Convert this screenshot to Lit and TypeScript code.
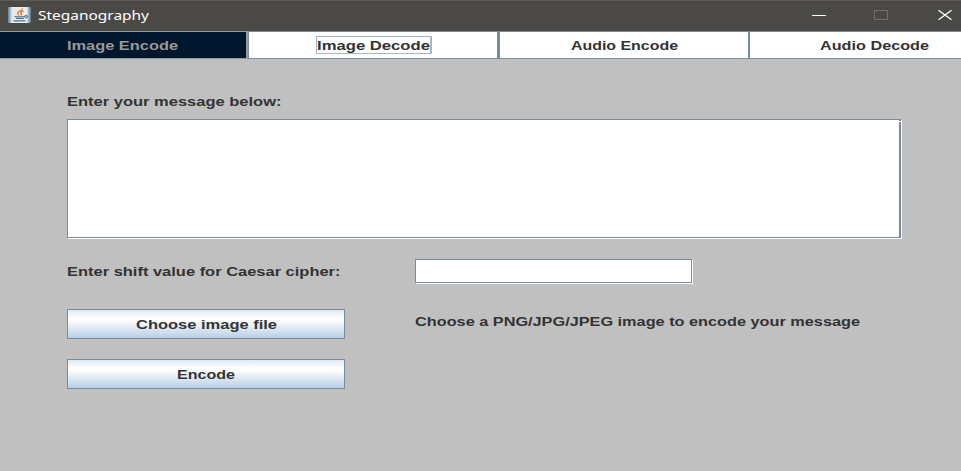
import { LitElement, html, css, svg } from "lit";
import { customElement, property } from "lit/decorators.js";

/** One line of Swing-style text, fitted to a given advance width. */
@customElement("fit-text")
class FitText extends LitElement {
  @property() text = "";
  @property({ type: Number }) width = 100;
  static styles = css`
    :host { display: block; flex: none; }
    svg { display: block; overflow: visible; }
    text { font: inherit; fill: currentColor; }
  `;
  render() {
    return html`<svg width=${this.width} height="16">${svg`<text x="0" y="12" textLength=${this.width} lengthAdjust="spacingAndGlyphs">${this.text}</text>`}</svg>`;
  }
}

@customElement("app-root")
class AppRoot extends LitElement {
  static styles = css`
    :host {
      display: flex; flex-direction: column; width: 961px; height: 471px; overflow: hidden;
      background: #c0c0c0; color: #333; font: bold 12.5px "Liberation Sans", Arial, sans-serif;
    }
    * { box-sizing: border-box; }
    .bar {
      height: 31px; flex: none; display: flex; align-items: flex-start; background: #4b4946;
      border-top: 1px solid #5b5a57; color: #fff; padding-left: 8px;
    }
    .java { margin-top: 6px; display: block; flex: none; }
    .title { font: 13px "Noto Sans", "Open Sans", sans-serif; margin: 7px 0 0 7px; }
    .controls { margin-left: auto; display: block; flex: none; }
    .tabs { display: flex; height: 28px; flex: none; }
    .tab {
      flex: none; display: flex; justify-content: center; padding-top: 6px; width: 250px;
      background: #fff; border: solid #7a8a99; border-width: 1px 2px 1px 0;
    }
    .tab.active { width: 248px; padding-right: 1px; background: #00172d; color: #999; border-color: #999; }
    .tab.second { width: 252px; padding-left: 1px; border-width: 1px 3px 1px 1px; }
    .tab.last { border-right: 0; width: 211px; justify-content: flex-start; padding-left: 70px; }
    .focus { border: 1px solid #a3b8cc; border-right-width: 2px; height: 18px; width: 116px; margin-top: -2px; padding: 1px 0 0 0; }
    .panel { padding: 35px 0 0 67px; display: flex; flex-direction: column; }
    .area, .field {
      background: #fff; border: 1px solid #7a8a99; box-shadow: 1px 1px #fff;
    }
    .area { width: 834px; height: 119px; margin-top: 9px; border-right-width: 2px; }
    .notch { display: block; width: 2px; height: 1px; background: #fff; margin: 1px -2px 0 auto; }
    .grid { display: grid; grid-template-columns: 348px auto; margin-top: 21px; }
    .grid .lead { margin-top: 5px; }
    .field { width: 277px; height: 24px; }
    .button {
      width: 278px; height: 30px; border: 1px solid #7a8a99; display: flex; justify-content: center; padding-top: 7px;
      background: linear-gradient(#dde8f3 0%, #fff 30%, #fff 36%, #dde8f3 66%, #b8cfe5 100%);
    }
    .choose { margin-top: 26px; }
    .hint { margin-top: 31px; }
    .encode { margin-top: 20px; }
  `;
  render() {
    return html`
      <div class="bar">
        <svg class="java" width="23" height="16" viewBox="0 0 23 16">
          <defs>
            <linearGradient id="tile" x2="1"><stop stop-color="#5e7e99"/><stop offset=".18" stop-color="#e3e8ec"/><stop offset=".8" stop-color="#eef0f1"/><stop offset="1" stop-color="#557590"/></linearGradient>
          </defs>
          <rect width="23" height="16" rx="1" fill="url(#tile)"/>
          <path d="M14.2 1.5Q14.5 3 11.5 4.3Q8.2 6 11 8.5M15.5 4Q11.4 5.2 13.3 6.6Q14 7.4 12.8 8.5" fill="none" stroke="#ee7924" stroke-width="1.4"/>
          <path d="M6.5 9.4Q11 10.5 17 9.3M8 11.5H16M5.5 13.8H17.5M17 8.8Q20.5 8.2 18.8 10.2L16.8 11.2" fill="none" stroke="#4c7492" stroke-width="1.2"/>
        </svg>
        <fit-text class="title" text="Steganography" width="111"></fit-text>
        <svg class="controls" width="181" height="30" viewBox="0 1 181 30" fill="none">
          <path d="M32 15.5H46" stroke="#fff"/>
          <path d="M94.5 10.5H107.5V19.5H94.5Z" stroke="#73716f"/>
          <path d="M158.5 10.3L171.5 19.7M171.5 10.3L158.5 19.7" stroke="#fff" stroke-width="1.3"/>
        </svg>
      </div>
      <div class="tabs">
        <div class="tab active"><fit-text text="Image Encode" width="111"></fit-text></div>
        <div class="tab second"><div class="focus"><fit-text text="Image Decode" width="113"></fit-text></div></div>
        <div class="tab"><fit-text text="Audio Encode" width="107"></fit-text></div>
        <div class="tab last"><fit-text text="Audio Decode" width="109"></fit-text></div>
      </div>
      <div class="panel">
        <fit-text text="Enter your message below:" width="214.5"></fit-text>
        <div class="area"><i class="notch"></i></div>
        <div class="grid">
          <fit-text class="lead" text="Enter shift value for Caesar cipher:" width="273.5"></fit-text>
          <div class="field"></div>
          <div class="button choose"><fit-text text="Choose image file" width="141"></fit-text></div>
          <fit-text class="hint" text="Choose a PNG/JPG/JPEG image to encode your message" width="445"></fit-text>
          <div class="button encode"><fit-text text="Encode" width="58"></fit-text></div>
        </div>
      </div>`;
  }
}
